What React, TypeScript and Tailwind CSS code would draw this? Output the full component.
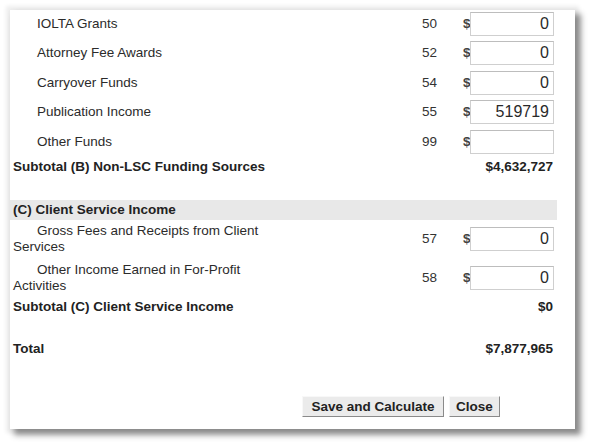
import React from "react";

const font = { fontFamily: '"Liberation Sans", Arial, sans-serif' };

function Money({ value }: { value: string }) {
  return (
    <input
      readOnly
      value={value}
      className="w-[84px] h-[24px] border border-[#cfcfcf] border-t-[#bdbdbd] bg-white text-right pr-[4px] text-[16px] text-[#2a2a2a] outline-none"
      style={font}
    />
  );
}

function Row({
  label,
  code,
  value,
  mt,
  wrap,
}: {
  label: string;
  code: string;
  value: string;
  mt: string;
  wrap?: boolean;
}) {
  return (
    <div className={`flex items-center ${mt} ${wrap ? "h-[32px]" : "h-[24px]"}`}>
      {wrap ? (
        <div className="w-[262px] indent-[24px] leading-[16px] text-[13.5px] text-[#2b2b2b]">{label}</div>
      ) : (
        <div className="pl-[24px] text-[13.5px] text-[#2b2b2b]">{label}</div>
      )}
      <div className="flex-1" />
      <div className="w-[40px] text-right text-[13.5px] text-[#333]">{code}</div>
      <div className="w-[26px]" />
      <div className="w-[7px] text-[13.5px] font-bold text-[#444]">$</div>
      <Money value={value} />
    </div>
  );
}

function Summary({ label, amount, mt }: { label: string; amount: string; mt: string }) {
  return (
    <div className={`flex items-center justify-between h-[15px] ${mt} font-bold text-[13.5px] text-[#222]`}>
      <span>{label}</span>
      <span className="pr-[1px]">{amount}</span>
    </div>
  );
}

export default function App() {
  return (
    <div className="w-[589px] h-[445px] bg-white overflow-hidden" style={font}>
      <div className="ml-[10px] mt-[10px] w-[565px] h-[419px] bg-white shadow-[0_0_4px_4px_rgba(0,0,0,0.07),5px_5px_6px_1px_rgba(0,0,0,0.42)] flex flex-col pl-[3px] pr-[21px]">
        <Row label="IOLTA Grants" code="50" value="0" mt="mt-[2px]" />
        <Row label="Attorney Fee Awards" code="52" value="0" mt="mt-[5px]" />
        <Row label="Carryover Funds" code="54" value="0" mt="mt-[6px]" />
        <Row label="Publication Income" code="55" value="519719" mt="mt-[5px]" />
        <Row label="Other Funds" code="99" value="" mt="mt-[6px]" />
        <Summary label="Subtotal (B) Non-LSC Funding Sources" amount="$4,632,727" mt="mt-[6px]" />
        <div className="mt-[25px] h-[20px] -ml-[3px] -mr-[3px] pl-[3px] bg-[#e8e8e8] flex items-center font-bold text-[13.5px] text-[#222]">
          (C) Client Service Income
        </div>
        <Row label="Gross Fees and Receipts from Client Services" code="57" value="0" mt="mt-[3px]" wrap />
        <Row label="Other Income Earned in For-Profit Activities" code="58" value="0" mt="mt-[7px]" wrap />
        <Summary label="Subtotal (C) Client Service Income" amount="$0" mt="mt-[6px]" />
        <Summary label="Total" amount="$7,877,965" mt="mt-[27px]" />
        <div className="mt-[39px] flex justify-end pr-[54px] gap-[5px]">
          <button className="w-[142px] h-[21px] bg-[#ebebeb] border border-t-[#f8f8f8] border-l-[#f8f8f8] border-r-[#8a8a8a] border-b-[#8a8a8a] font-bold text-[13.5px] text-[#222] leading-none">
            Save and Calculate
          </button>
          <button className="w-[51px] h-[21px] bg-[#ebebeb] border border-t-[#f8f8f8] border-l-[#f8f8f8] border-r-[#8a8a8a] border-b-[#8a8a8a] font-bold text-[13.5px] text-[#222] leading-none">
            Close
          </button>
        </div>
      </div>
    </div>
  );
}
